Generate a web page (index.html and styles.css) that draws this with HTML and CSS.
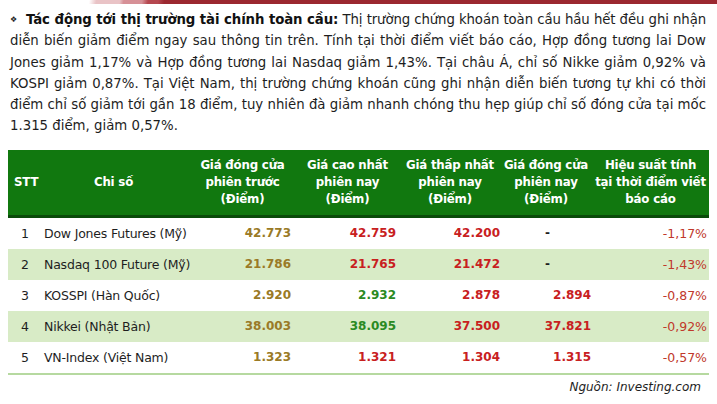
FILE: index.html
```html
<!DOCTYPE html>
<html lang="vi">
<head>
<meta charset="utf-8">
<link rel="stylesheet" href="styles.css">
</head>
<body>
<div class="topbar"></div>
<div class="para">
<div class="ln first"><span class="bullet">❖</span><b>Tác động tới thị trường tài chính toàn cầu:</b> Thị trường chứng khoán toàn cầu hầu hết đều ghi nhận</div>
<div class="ln">diễn biến giảm điểm ngay sau thông tin trên. Tính tại thời điểm viết báo cáo, Hợp đồng tương lai Dow</div>
<div class="ln">Jones giảm 1,17% và Hợp đồng tương lai Nasdaq giảm 1,43%. Tại châu Á, chỉ số Nikke giảm 0,92% và</div>
<div class="ln">KOSPI giảm 0,87%. Tại Việt Nam, thị trường chứng khoán cũng ghi nhận diễn biến tương tự khi có thời</div>
<div class="ln">điểm chỉ số giảm tới gần 18 điểm, tuy nhiên đà giảm nhanh chóng thu hẹp giúp chỉ số đóng cửa tại mốc</div>
<div class="ln end">1.315 điểm, giảm 0,57%.</div>
</div>
<div class="tablewrap">
<table class="tbl">
<colgroup>
<col class="c1"><col class="c2"><col class="c3"><col class="c4"><col class="c5"><col class="c6"><col class="c7">
</colgroup>
<thead>
<tr>
<th class="h-stt">STT</th>
<th>Chi số</th>
<th>Giá đóng cửa<br>phiên trước<br>(Điểm)</th>
<th>Giá cao nhất<br>phiên nay<br>(Điểm)</th>
<th>Giá thấp nhất<br>phiên nay<br>(Điểm)</th>
<th>Giá đóng cửa<br>phiên nay<br>(Điểm)</th>
<th class="h-last">Hiệu suất tính<br>tại thời điểm viết<br>báo cáo</th>
</tr>
</thead>
<tbody>
<tr>
<td class="stt">1</td><td class="name">Dow Jones Futures (Mỹ)</td>
<td class="num gold">42.773</td><td class="num red">42.759</td><td class="num red n5">42.200</td><td class="dash">-</td><td class="pct">-1,17%</td>
</tr>
<tr class="alt">
<td class="stt">2</td><td class="name">Nasdaq 100 Future (Mỹ)</td>
<td class="num gold">21.786</td><td class="num red">21.765</td><td class="num red n5">21.472</td><td class="dash">-</td><td class="pct">-1,43%</td>
</tr>
<tr>
<td class="stt">3</td><td class="name">KOSSPI (Hàn Quốc)</td>
<td class="num gold">2.920</td><td class="num green">2.932</td><td class="num red n5">2.878</td><td class="num red n6">2.894</td><td class="pct">-0,87%</td>
</tr>
<tr class="alt">
<td class="stt">4</td><td class="name">Nikkei (Nhật Bản)</td>
<td class="num gold">38.003</td><td class="num green">38.095</td><td class="num red n5">37.500</td><td class="num red n6">37.821</td><td class="pct">-0,92%</td>
</tr>
<tr class="last">
<td class="stt">5</td><td class="name">VN-Index (Việt Nam)</td>
<td class="num gold">1.323</td><td class="num red">1.321</td><td class="num red n5">1.304</td><td class="num red n6">1.315</td><td class="pct">-0,57%</td>
</tr>
</tbody>
</table>
</div>
<p class="source">Nguồn: Investing.com</p>
<p class="next">Tác động tới thị trường hàng hóa và tiền tệ toàn cầu: Giá vàng</p>
</body>
</html>
```

FILE: styles.css
```css
html, body {
  margin: 0;
  padding: 0;
  background: #ffffff;
  overflow: hidden;
}
body {
  width: 717px;
  height: 404px;
  font-family: "DejaVu Sans", Verdana, sans-serif;
  color: #1e1e1e;
}
.topbar {
  height: 4px;
  background: linear-gradient(100deg, #ffffff 0px, #ffffff 88px, #e9c3c6 95px, #e9c3c6 118px, #d69096 122px, #d69096 140px, #b5474f 146px, #b5474f 156px, #9b2830 162px, #9b2830 100%);
}
.para {
  margin: 5px 11px 0 10px;
  font-size: 13.3px;
  line-height: 21.3px;
}
.ln {
  text-align: justify;
  text-align-last: justify;
  white-space: nowrap;
}
.ln.first {
  letter-spacing: -0.12px;
}
.ln.end {
  text-align-last: left;
}
.bullet {
  display: inline-block;
  font-size: 8px;
  line-height: 10px;
  width: 16px;
  vertical-align: 2px;
}
.para b {
  color: #111;
}
.tablewrap {
  margin: 13px 0 0 8px;
  width: 701px;
  overflow: hidden;
}
.tbl {
  border-collapse: collapse;
  table-layout: fixed;
  width: 701px;
}
.c1 { width: 29px; }
.c2 { width: 153px; }
.c3 { width: 105px; }
.c4 { width: 105px; }
.c5 { width: 100px; }
.c6 { width: 92px; }
.c7 { width: 117px; }
.tbl thead tr {
  background: #11780f;
  border-bottom: 3px solid #0a4b0a;
}
.tbl th {
  color: #ffffff;
  font-size: 11.8px;
  font-weight: bold;
  line-height: 17px;
  height: 65px;
  padding: 0;
  text-align: center;
  white-space: nowrap;
  letter-spacing: -0.2px;
}
.tbl th.h-stt {
  text-align: left;
  padding-left: 6px;
}
.tbl td {
  height: 31px;
  padding: 0;
  font-size: 12px;
  white-space: nowrap;
}
.tbl tr.alt td {
  background: #d8ebc6;
}
.tbl tr.last {
  border-bottom: 2px solid #b6d9a0;
}
.stt {
  text-align: right;
  padding-right: 8px !important;
  font-size: 12.5px !important;
  color: #1e1e1e;
}
.name {
  text-align: left;
  padding-left: 7px !important;
  font-size: 12.5px !important;
  color: #1e1e1e;
  letter-spacing: -0.2px;
}
.num {
  text-align: right;
  font-weight: bold;
  padding-right: 4px !important;
}
.n5 { padding-right: 0 !important; }
.n6 { padding-right: 1px !important; }
.gold { color: #9a7a26; }
.red { color: #c8201e; }
.green { color: #2a8a22; }
.dash {
  text-align: left;
  padding-left: 45px !important;
  font-weight: bold;
  color: #1e1e1e;
}
.pct {
  text-align: right;
  padding-right: 2px !important;
  color: #c0392b;
  font-size: 12.5px !important;
}
.source {
  margin: 5px 16px 0 0;
  text-align: right;
  font-style: italic;
  font-size: 12px;
  color: #1e1e1e;
}
.next {
  margin: 10px 0 0 48px;
  font-weight: bold;
  font-size: 13px;
  color: #1e1e1e;
}
```
